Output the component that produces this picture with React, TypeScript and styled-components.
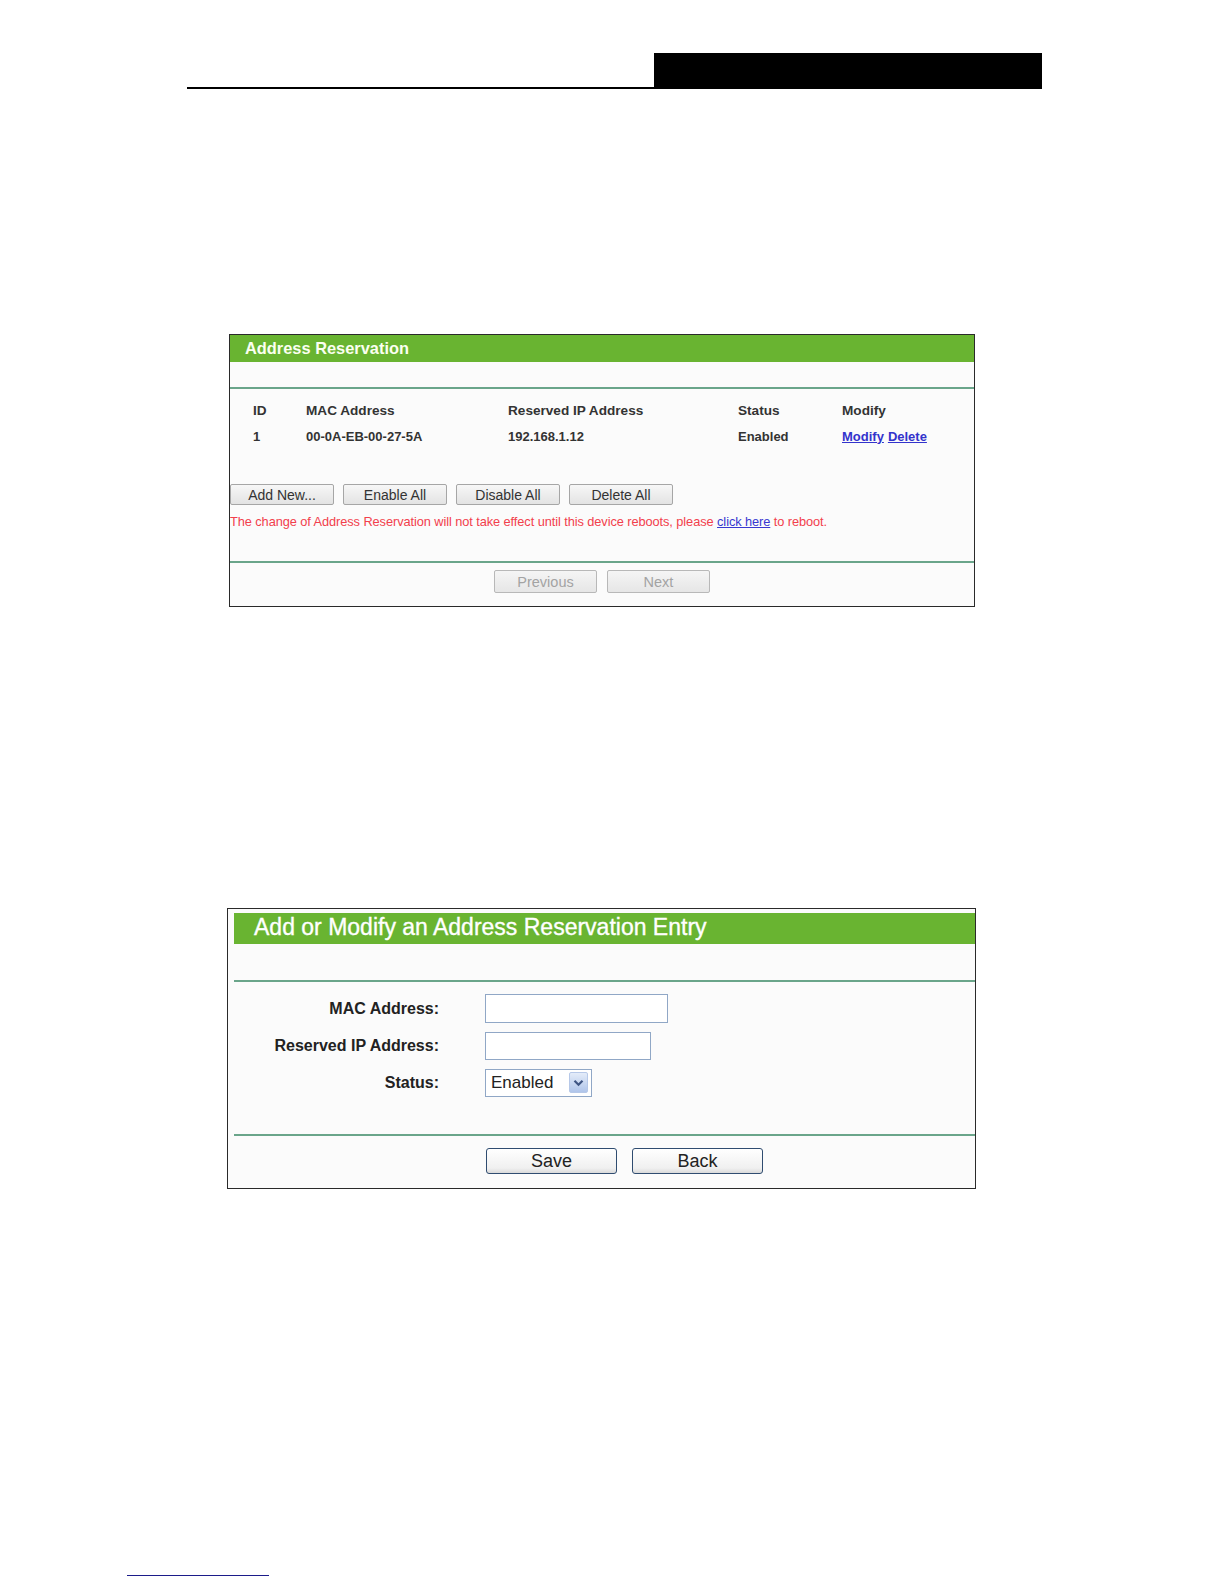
import styled, { createGlobalStyle } from "styled-components";

const GlobalStyle = createGlobalStyle`
  html, body {
    margin: 0;
    padding: 0;
    background: #ffffff;
  }
  body {
    font-family: "Liberation Sans", Arial, sans-serif;
    color: #333;
  }
`;

const GREEN = "#69b431";
const RULE = "#6aa58a";

const Page = styled.div`
  width: 1224px;
  min-height: 1584px;
  padding-top: 53px;
  box-sizing: border-box;
  display: flex;
  flex-direction: column;
`;

const DocHeader = styled.header`
  display: flex;
  align-items: flex-end;
  margin-left: 187px;
  width: 855px;
  height: 36px;
`;

const HeaderRule = styled.div`
  flex: 0 0 467px;
  height: 2px;
  background: #000;
`;

const HeaderTab = styled.div`
  flex: 1;
  height: 36px;
  background: #000;
`;

const ListPanel = styled.section`
  margin: 245px 0 0 229px;
  width: 746px;
  height: 273px;
  box-sizing: border-box;
  border: 1px solid #2a2a2a;
  background: #fbfbfb;
  display: flex;
  flex-direction: column;
`;

const ListTitle = styled.div`
  height: 27px;
  background: ${GREEN};
  display: flex;
  align-items: center;
  padding-left: 15px;
  color: #fbfff0;
  font-weight: bold;
  font-size: 16.4px;
`;

const Rule = styled.div<{ $mt: number }>`
  height: 2px;
  margin-top: ${(p) => p.$mt}px;
  background: ${RULE};
  flex-shrink: 0;
`;

const Table = styled.div`
  display: grid;
  grid-template-columns: 53px 202px 230px 104px 1fr;
  grid-auto-rows: 26px;
  align-items: center;
  margin-top: 8px;
  padding-left: 23px;
  font-weight: bold;
  color: #333;
`;

const Cell = styled.div<{ $head?: boolean }>`
  white-space: nowrap;
  font-size: ${(p) => (p.$head ? "13.6px" : "13px")};
`;

const BoldLink = styled.a`
  color: #3333cc;
  text-decoration: underline;
  margin-right: 4px;
  cursor: pointer;
`;

const ActionRow = styled.div`
  display: flex;
  gap: 9px;
  margin-top: 35px;
`;

const GreyButton = styled.button`
  width: 104px;
  height: 21px;
  padding: 0;
  box-sizing: border-box;
  border: 1px solid #a6a6a6;
  border-radius: 2px;
  background: linear-gradient(#f7f7f7, #e3e3e3);
  font-family: "Liberation Sans", Arial, sans-serif;
  font-size: 14px;
  color: #333;
  cursor: pointer;

  &:disabled {
    width: 103px;
    height: 23px;
    border-color: #b8b8b8;
    background: linear-gradient(#f5f5f5, #e6e6e6);
    color: #a3a3a3;
    font-size: 14.5px;
    cursor: default;
  }
`;

const Notice = styled.p`
  margin: 9px 0 0 0;
  line-height: 16px;
  font-size: 12.8px;
  letter-spacing: -0.08px;
  color: #f2404c;
  white-space: nowrap;
`;

const TextLink = styled.a`
  color: #3838d0;
  text-decoration: underline;
  cursor: pointer;
`;

const Pager = styled.div`
  display: flex;
  justify-content: center;
  gap: 10px;
  padding-top: 7px;
`;

const FormPanel = styled.section`
  margin: 301px 0 0 227px;
  width: 749px;
  height: 281px;
  box-sizing: border-box;
  border: 1px solid #2a2a2a;
  padding: 4px 0 0 6px;
  background: #fbfbfb;
  display: flex;
  flex-direction: column;
`;

const FormTitle = styled.div`
  height: 31px;
  background: ${GREEN};
  padding: 0 0 3px 20px;
  box-sizing: border-box;
  display: flex;
  align-items: center;
  color: #ffffff;
  font-size: 23px;
  -webkit-text-stroke: 0.35px #ffffff;
`;

const FormGrid = styled.div`
  display: grid;
  grid-template-columns: 205px 1fr;
  column-gap: 46px;
  grid-auto-rows: 37px;
  align-items: center;
  margin-top: 8px;
`;

const Label = styled.label`
  text-align: right;
  font-weight: bold;
  font-size: 16px;
  color: #222;
  white-space: nowrap;
`;

const TextInput = styled.input<{ $w: number; $h: number }>`
  width: ${(p) => p.$w}px;
  height: ${(p) => p.$h}px;
  box-sizing: border-box;
  border: 1px solid #90a7c6;
  background: #fff;
  padding: 0 4px;
  font-family: "Liberation Sans", Arial, sans-serif;
  font-size: 16px;
  outline: none;
`;

const SelectBox = styled.div`
  width: 107px;
  height: 28px;
  box-sizing: border-box;
  border: 1px solid #90a7c6;
  background: #fff;
  display: flex;
  align-items: center;
  justify-content: space-between;
  padding: 0 3px 0 5px;
  font-size: 17px;
  color: #222;
`;

const ArrowBox = styled.span`
  width: 19px;
  height: 21px;
  box-sizing: border-box;
  border: 1px solid #b6c8e8;
  border-radius: 2px;
  background: linear-gradient(#e4ecf9, #b0c5ea);
  display: flex;
  align-items: center;
  justify-content: center;
`;

const FormButtons = styled.div`
  display: flex;
  gap: 15px;
  margin-top: 12px;
  padding-left: 252px;
`;

const BlueButton = styled.button`
  width: 131px;
  height: 26px;
  padding: 0;
  box-sizing: border-box;
  border: 1px solid #2f4c70;
  border-radius: 3px;
  background: linear-gradient(#ffffff, #f0f0f0 80%, #d9d9d9);
  font-family: "Liberation Sans", Arial, sans-serif;
  font-size: 18px;
  color: #222;
  cursor: pointer;
`;

const FootLine = styled.div`
  margin: 386px 0 0 127px;
  width: 142px;
  height: 1px;
  background: #1c1c8a;
`;

const reservations = [
  { id: 1, mac: "00-0A-EB-00-27-5A", ip: "192.168.1.12", status: "Enabled" },
];

const columns = ["ID", "MAC Address", "Reserved IP Address", "Status", "Modify"];

export default function App() {
  return (
    <Page>
      <GlobalStyle />
      <DocHeader>
        <HeaderRule />
        <HeaderTab />
      </DocHeader>

      <ListPanel>
        <ListTitle>Address Reservation</ListTitle>
        <Rule $mt={25} />
        <Table>
          {columns.map((c) => (
            <Cell key={c} $head>
              {c}
            </Cell>
          ))}
          {reservations.map((r) => [
            <Cell key={`id-${r.id}`}>{r.id}</Cell>,
            <Cell key={`mac-${r.id}`}>{r.mac}</Cell>,
            <Cell key={`ip-${r.id}`}>{r.ip}</Cell>,
            <Cell key={`st-${r.id}`}>{r.status}</Cell>,
            <Cell key={`mod-${r.id}`}>
              <BoldLink>Modify</BoldLink>
              <BoldLink>Delete</BoldLink>
            </Cell>,
          ])}
        </Table>
        <ActionRow>
          <GreyButton>Add New...</GreyButton>
          <GreyButton>Enable All</GreyButton>
          <GreyButton>Disable All</GreyButton>
          <GreyButton>Delete All</GreyButton>
        </ActionRow>
        <Notice>
          The change of Address Reservation will not take effect until this device reboots, please{" "}
          <TextLink>click here</TextLink> to reboot.
        </Notice>
        <Rule $mt={31} />
        <Pager>
          <GreyButton disabled>Previous</GreyButton>
          <GreyButton disabled>Next</GreyButton>
        </Pager>
      </ListPanel>

      <FormPanel>
        <FormTitle>Add or Modify an Address Reservation Entry</FormTitle>
        <Rule $mt={36} />
        <FormGrid>
          <Label>MAC Address:</Label>
          <TextInput $w={183} $h={29} />
          <Label>Reserved IP Address:</Label>
          <TextInput $w={166} $h={28} />
          <Label>Status:</Label>
          <SelectBox>
            Enabled
            <ArrowBox>
              <svg width="11" height="8" viewBox="0 0 11 8">
                <polyline points="1.5,1.8 5.5,5.8 9.5,1.8" fill="none" stroke="#3f5583" strokeWidth="2.2" />
              </svg>
            </ArrowBox>
          </SelectBox>
        </FormGrid>
        <Rule $mt={33} />
        <FormButtons>
          <BlueButton>Save</BlueButton>
          <BlueButton>Back</BlueButton>
        </FormButtons>
      </FormPanel>

      <FootLine />
    </Page>
  );
}
